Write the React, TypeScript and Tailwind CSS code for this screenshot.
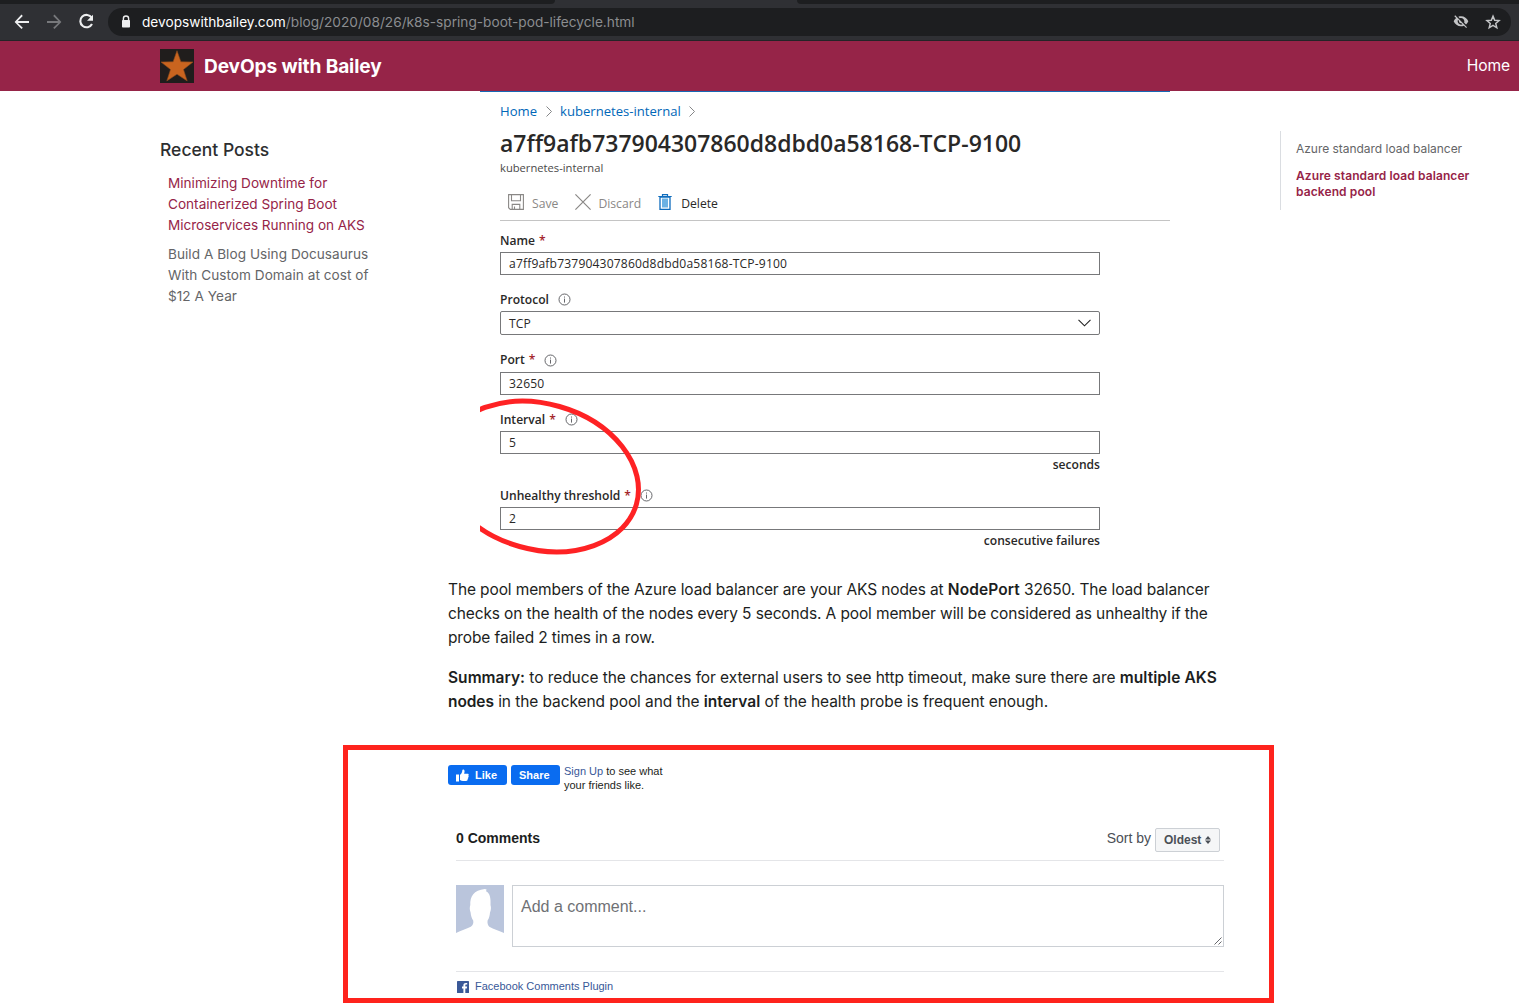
import React from "react";

function BrowserBar() {
  return (
    <div className="h-[41px] bg-[#2f3034] font-[Inter,sans-serif]">
      <div className="flex h-1 justify-between bg-[#2f3034]">
        <div className="w-[555px] rounded-br-[6px] bg-[#1d1e20]" />
        <div className="w-[722px] rounded-bl-[6px] bg-[#1d1e20]" />
      </div>
      <div className="flex h-[37px] items-center border-b border-[#232427] pr-2">
        <div className="flex w-[108px] items-center gap-2 pl-[10px]">
          <svg className="size-6" viewBox="0 0 24 24" fill="#eeeff0">
            <path d="M19 11H7.800l5-5.100L11.500 4.600 4.600 12l6.900 7.100 1.300-1.300L7.800 13H19z" />
          </svg>
          <svg className="size-6" viewBox="0 0 24 24" fill="#77787b">
            <path d="M5 11h11.200l-5-5.100 1.300-1.300L19.400 12l-6.900 7.100-1.300-1.300 5-4.800H5z" />
          </svg>
          <svg className="size-6" viewBox="0 0 24 24" fill="none" stroke="#eeeff0" strokeWidth="2.100">
            <path d="M17.700 7.700A6.200 6.200 0 1 0 18 14" />
            <path d="M19 4.800v6h-6z" fill="#eeeff0" stroke="none" />
          </svg>
        </div>
        <div className="flex h-7 flex-1 items-center rounded-full bg-[#1d1e20] pl-3 pr-[10px]">
          <svg className="h-4 w-3" viewBox="0 0 12 16">
            <path d="M3.400 7V4.600a2.600 2.600 0 0 1 5.200 0V7" fill="none" stroke="#eeeff0" strokeWidth="1.400" />
            <rect x="2" y="6" width="8" height="7.500" rx=".8" fill="#eeeff0" />
          </svg>
          <p className="ml-[10px] text-[13.68px] leading-5 whitespace-nowrap text-white">
            devopswithbailey.com
            <span className="text-[#8b8d90]">/blog/2020/08/26/k8s-spring-boot-pod-lifecycle.html</span>
          </p>
          <svg className="ml-auto size-4" viewBox="0 0 24 24" fill="#c3c4c6">
            <path d="M12 6c2.760 0 5 2.240 5 5 0 .650-.130 1.260-.360 1.830l2.920 2.920c1.510-1.260 2.700-2.890 3.430-4.750C21.270 6.610 17 3.500 12 3.500c-1.400 0-2.740.250-3.980.700l2.160 2.160C10.740 6.130 11.350 6 12 6zM2 3.270l2.280 2.280.460.460C3.080 7.300 1.780 9.020 1 11c1.730 4.390 6 7.500 11 7.500 1.550 0 3.030-.300 4.380-.840l.420.420L19.730 21 21 19.730 3.270 2 2 3.270zM7.530 8.800l1.550 1.550c-.050.210-.080.430-.080.650 0 1.660 1.340 3 3 3 .220 0 .440-.030.650-.080l1.550 1.550c-.670.330-1.410.530-2.200.530-2.760 0-5-2.240-5-5 0-.790.200-1.530.530-2.200z" />
          </svg>
          <svg className="ml-4 size-4" viewBox="0 0 24 24" fill="none" stroke="#c3c4c6" strokeWidth="2.200">
            <path d="m12 3.200 2.500 6.200 6.600.500-5 4.300 1.600 6.500-5.700-3.500-5.700 3.500 1.600-6.500-5-4.300 6.600-.500z" />
          </svg>
        </div>
      </div>
    </div>
  );
}

function SiteHeader() {
  return (
    <header className="flex h-[50px] items-center bg-[#962448] pl-40 pr-[9px] text-white">
      <svg className="size-[34px]" viewBox="0 0 34 34">
        <rect width="34" height="34" fill="#201d1c" />
        <path
          d="m17 1.700 3.900 11.100 12.100.200-9.500 7.500 3.700 11.400L17 25.200 6.800 31.900l3.700-11.400L1 13l12.100-.200z"
          fill="#c9641f"
          stroke="#8a4a1c"
          strokeWidth=".6"
        />
      </svg>
      <span className="ml-[10px] text-[19.1px] font-bold tracking-[-0.12px]">DevOps with Bailey</span>
      <a className="ml-auto text-[15.6px] tracking-[-0.12px]">Home</a>
    </header>
  );
}

function RecentPosts() {
  return (
    <aside className="w-[448px] shrink-0 pl-40 pt-[47px]">
      <h3 className="text-[17.5px] leading-6 font-medium text-[#2d2e30]">Recent Posts</h3>
      <ul className="mt-[11px] space-y-2 pl-2 text-[13.6px] leading-[21px] text-[#646567]">
        <li className="text-[#962448]">
          Minimizing Downtime for
          <br />
          Containerized Spring Boot
          <br />
          <span className="tracking-[-0.04px]">Microservices Running on AKS</span>
        </li>
        <li className="tracking-[0.04px]">
          Build A Blog Using Docusaurus
          <br />
          With Custom Domain at cost of
          <br />
          $12 A Year
        </li>
      </ul>
    </aside>
  );
}

function InfoIcon() {
  return (
    <svg className="ml-[9px] size-[13px]" viewBox="0 0 13 13" fill="none" stroke="#55565a">
      <circle cx="6.500" cy="6.500" r="5.500" strokeWidth=".9" />
      <path d="M6.500 5.600v4M6.500 3.500v1.100" strokeWidth=".9" />
    </svg>
  );
}

function Crumb() {
  return (
    <svg className="h-[11px] w-[6px]" viewBox="0 0 6 11" fill="none" stroke="#77787a" strokeWidth=".9">
      <path d="m.5.500 5 5-5 5" />
    </svg>
  );
}

type FieldProps = {
  label: string;
  value: string;
  required?: boolean;
  info?: boolean;
  select?: boolean;
  unit?: string;
  raised?: boolean;
};

function Field({ label, value, required, info, select, unit, raised }: FieldProps) {
  return (
    <div className="w-[600px]">
      <div className="flex h-6 items-center text-[12.1px] font-semibold text-[#292827]">
        <span className={raised ? "" : "pt-0.5"}>
          {label}
          {required && <span className="ml-1 text-[#a4262c]">*</span>}
        </span>
        {info && <InfoIcon />}
      </div>
      <div
        className={
          "flex items-center justify-between border border-[#77787a] pl-2 pr-2 text-[12.1px] tracking-[0.16px] text-[#292827] " +
          (select ? "h-6 rounded-[2px]" : "h-[23px]")
        }
      >
        <span className="pt-0.5">{value}</span>
        {select && (
          <svg className="h-2 w-[13px]" viewBox="0 0 13 8" fill="none" stroke="#222" strokeWidth="1.100">
            <path d="m.5.800 6 6 6-6" />
          </svg>
        )}
      </div>
      {unit && <div className="h-5 text-right text-[12.1px] leading-[21px] font-semibold text-[#292827]">{unit}</div>}
    </div>
  );
}

function ProbeSettings() {
  return (
    <section className="relative ml-8 h-[487px] w-[690px] overflow-hidden border-t border-[#1768b5] pl-5 font-['Open_Sans',sans-serif]">
      <nav className="mt-[9px] flex h-5 items-center text-[13.1px] text-[#0067b8]">
        <span className="pt-0.5">Home</span>
        <span className="ml-[9px] mr-2"><Crumb /></span>
        <span className="pt-0.5">kubernetes-internal</span>
        <span className="ml-2"><Crumb /></span>
      </nav>
      <h1 className="mt-2 h-[30px] text-[22.97px] leading-[29px] font-semibold text-[#292827]">
        a7ff9afb737904307860d8dbd0a58168-TCP-9100
      </h1>
      <p className="h-[18px] text-[11.2px] leading-[18px] text-[#4a4948]">kubernetes-internal</p>
      <div className="mt-2 flex h-[36px] items-center border-b border-[#c4c4c4] pl-2 text-[12.2px] text-[#8a8886]">
        <svg className="mb-0.5 size-4" viewBox="0 0 16 16" fill="none" stroke="#8a8886" strokeWidth="1.100">
          <path d="M.6.600h14.800v14.800H2.300L.6 13.700zM3.500.600v6.200h9V.600M4.200 15.400v-5h7.600v5M6.500 12.500v3" />
        </svg>
        <span className="ml-2 pt-1">Save</span>
        <svg className="mb-0.5 ml-[17px] size-4" viewBox="0 0 16 16" fill="none" stroke="#8a8886" strokeWidth="1.200">
          <path d="m.4.400 15.200 15.200M15.600.400.4 15.600" />
        </svg>
        <span className="ml-[7px] pt-1">Discard</span>
        <svg className="mb-0.5 ml-[17px] h-4 w-[14px]" viewBox="0 0 14 16">
          <path d="M2 3h10v12.300H2z" fill="#fff" stroke="#0f6cbd" strokeWidth="1.300" />
          <path d="M4 4.500h6v9H4z" fill="#6bb1e3" />
          <path d="M.3 2.500h13.400M4.500 2.200V.7h5v1.500" fill="none" stroke="#0f6cbd" strokeWidth="1.200" />
        </svg>
        <span className="ml-[9px] pt-1 text-[#292827]">Delete</span>
      </div>
      <div className="mt-[7px]">
        <Field label="Name" required value="a7ff9afb737904307860d8dbd0a58168-TCP-9100" />
      </div>
      <div className="mt-3">
        <Field label="Protocol" info select value="TCP" />
      </div>
      <div className="mt-[13px]">
        <Field label="Port" required info raised value="32650" />
      </div>
      <div className="mt-3">
        <Field label="Interval" required info value="5" unit="seconds" />
      </div>
      <div className="mt-[9px]">
        <Field label="Unhealthy threshold" required info value="2" unit="consecutive failures" />
      </div>
      {/* hand-drawn highlight around the probe interval and threshold */}
      <svg
        className="pointer-events-none absolute left-0 top-[299px] h-[170px] w-[180px]"
        viewBox="0 0 180 170"
        fill="none"
      >
        <ellipse cx="59.500" cy="85.500" rx="100.800" ry="72.800" transform="rotate(15.900 59.500 85.500)" stroke="#fe2224" strokeWidth="5" />
      </svg>
    </section>
  );
}

function Comments() {
  return (
    <section className="relative mt-[31px] h-[258px] pt-5 font-['Liberation_Sans',sans-serif]">
      <div className="pointer-events-none absolute inset-y-0 -left-[105px] w-[931px] border-[5px] border-[#fe231d]" />
      <div className="flex h-[30px] text-[11px] text-[#1c1e21]">
        <div className="flex h-5 w-[59px] items-center rounded-[3px] bg-[#0a6cf0] pl-2 font-bold text-white">
          <svg className="mr-[6px] size-[13px]" viewBox="0 0 13 13" fill="#fff">
            <path d="M0 5.500h3V12.500H0zM4 5.700C5.600 4.800 6.300 3 6.300 1.200 6.300.1 8.600 0 8.600 2.300c0 1-.300 1.700-.500 2.400h3.400c1.300 0 1.600 1.300.8 1.900.6.600.4 1.500-.200 1.800.400.700.1 1.400-.500 1.700.300.900-.200 1.900-1.500 1.900H7c-1.200 0-2-.300-3-.900z" />
          </svg>
          Like
        </div>
        <div className="ml-1 flex h-5 w-[49px] items-center rounded-[3px] bg-[#0a6cf0] pl-2 font-bold text-white">
          Share
        </div>
        <p className="-mt-px ml-1 leading-[14px]">
          <a className="text-[#385898]">Sign Up</a> to see what
          <br />
          your friends like.
        </p>
      </div>
      <div className="ml-2 w-[768px]">
        <div className="mt-7 flex h-[38px] border-b border-[#e4e5e8] pr-1">
          <h2 className="pt-[5px] text-[14px] leading-5 font-bold text-[#1c1e21]">0 Comments</h2>
          <span className="ml-auto pt-[5px] text-[14px] leading-5 text-[#4b4f56]">Sort by</span>
          <button className="ml-1 mt-[5px] flex h-6 w-[65px] items-center rounded-[2px] border border-[#ccd0d5] bg-[#f5f6f7] pl-2 text-[12px] font-bold text-[#4b4f56]">
            Oldest
            <svg className="ml-1 h-2 w-[6px]" viewBox="0 0 6 8" fill="#4b4f56">
              <path d="M3 0 6 3.400H0zM3 8 0 4.600h6z" />
            </svg>
          </button>
        </div>
        <div className="mt-6 flex">
          <svg className="size-12" viewBox="0 0 48 48">
            <rect width="48" height="48" fill="#bac5dc" />
            <path
              d="M0 48c5-2.400 10.500-4 14.800-6.200 2.200-1.600 2.900-4 2.400-6.300-1.600-2.300-2.300-5-2.600-8-1.200-3-.900-5.500-.3-7.500-.4-8.500 3.500-15 14.500-16l1.800.600-.6 1.600c4 1.800 4.900 7 4.500 13.800.8 2.500.5 5-.5 7.500-.3 3-.8 5.700-2.400 8-.4 2.400.2 4.800 1.700 6.300C37.500 44.200 43.500 45.800 48 48z"
              fill="#fff"
            />
          </svg>
          <div className="relative ml-2 h-[62px] flex-1 border border-[#ccd0d5] px-2 pt-[10px] text-[16px] leading-[22px] text-[#6f7175]">
            Add a comment...
            <svg className="absolute right-[1px] bottom-[1px] size-2" viewBox="0 0 8 8" stroke="#55565a">
              <path d="M.5 7.500 7.500.500M4.500 7.500l3-3" strokeWidth=".9" />
            </svg>
          </div>
        </div>
        <div className="mt-6 flex h-[30px] items-center border-t border-[#e4e5e8] pl-[1px] text-[11px] text-[#385898]">
          <svg className="mr-[6px] size-3" viewBox="0 0 12 12">
            <rect width="12" height="12" rx=".6" fill="#3b5998" />
            <path d="M8.300 12V7.400h1.500L10.100 5.600H8.300V4.500c0-.6.200-.9.900-.9h1V2c-2.600-.4-3.800.4-3.800 2.200v1.400H5v1.800h1.400V12z" fill="#fff" />
          </svg>
          Facebook Comments Plugin
        </div>
      </div>
    </section>
  );
}

export default function App() {
  return (
    <div className="h-[1006px] w-[1519px] overflow-hidden bg-white font-[Inter,sans-serif]">
      <BrowserBar />
      <SiteHeader />
      <div className="flex">
        <RecentPosts />
        <main className="w-[832px] shrink-0">
          <ProbeSettings />
          <div className="space-y-4 text-[15.5px] leading-6 tracking-[-0.12px] whitespace-nowrap text-[#1c1e21]">
            <p>
              The pool members of the Azure load balancer are your AKS nodes at{" "}
              <b className="font-semibold tracking-[0.08px]">NodePort</b> 32650. The load balancer
              <br />
              checks on the health of the nodes every 5 seconds. A pool member will be considered as unhealthy if the
              <br />
              probe failed 2 times in a row.
            </p>
            <p className="tracking-[-0.08px]">
              <b className="font-semibold tracking-[0.03px]">Summary:</b> to reduce the chances for external users to see http
              timeout, make sure there are <b className="font-semibold tracking-[0.08px]">multiple AKS</b>
              <br />
              <b className="font-semibold">nodes</b> in the backend pool and the{" "}
              <b className="font-semibold tracking-[0.02px]">interval</b> of the health probe is frequent enough.
            </p>
          </div>
          <Comments />
        </main>
        <nav className="mt-10 h-[79px] w-[239px] border-l border-[#dadde1] pl-[15px] pt-[10px] text-[12px] leading-4 text-[#646567]">
          <p className="tracking-[-0.03px]">Azure standard load balancer</p>
          <p className="mt-[11px] font-semibold tracking-[0.1px] text-[#962448]">
            Azure standard load balancer
            <br />
            backend pool
          </p>
        </nav>
      </div>
    </div>
  );
}
